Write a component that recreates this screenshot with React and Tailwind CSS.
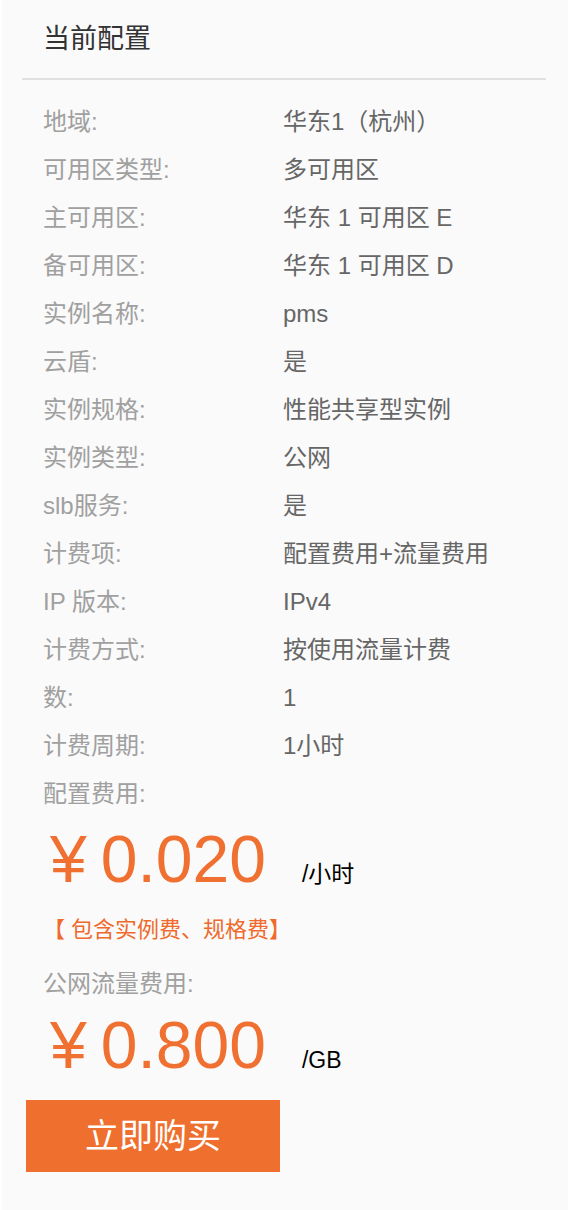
import React from 'react';

const rows = [
  ['地域:', '华东1（杭州）'],
  ['可用区类型:', '多可用区'],
  ['主可用区:', '华东 1 可用区 E'],
  ['备可用区:', '华东 1 可用区 D'],
  ['实例名称:', 'pms'],
  ['云盾:', '是'],
  ['实例规格:', '性能共享型实例'],
  ['实例类型:', '公网'],
  ['slb服务:', '是'],
  ['计费项:', '配置费用+流量费用'],
  ['IP 版本:', 'IPv4'],
  ['计费方式:', '按使用流量计费'],
  ['数:', '1'],
  ['计费周期:', '1小时'],
];

const Price = ({ value, unit }) => (
  <div className="flex items-baseline pl-[7px]">
    <span className="text-[66px] leading-none text-[#ef7030] mr-[14px]">¥</span>
    <span className="text-[66px] leading-none text-[#ef7030]">{value}</span>
    <span className="ml-[36px] text-[23px] text-black">{unit}</span>
  </div>
);

export default function App() {
  return (
    <div
      className="min-h-[1210px] bg-white"
      style={{ fontFamily: '"Liberation Sans", "Noto Sans CJK SC", sans-serif' }}
    >
      <div className="ml-[2px] min-h-[1210px] bg-[#fafafa]">
        {/* 标题 */}
        <div className="h-[78px] flex items-center pl-[41px] text-[27px] text-[#333]">
          当前配置
        </div>
        <div className="ml-[20px] w-[524px] h-[2px] bg-[#e0e0e0]"></div>

        <div className="pl-[41px] pt-[18px]">
          {rows.map(([label, value]) => (
            <div key={label} className="flex h-[48px] items-center text-[24px]">
              <div className="w-[240px] text-[#a0a0a0]">{label}</div>
              <div className="text-[#666]">{value}</div>
            </div>
          ))}

          <div className="h-[48px] flex items-center text-[24px] text-[#a0a0a0]">配置费用:</div>
          <div className="mt-[8px]">
            <Price value="0.020" unit="/小时" />
          </div>
          <div className="mt-[21px] text-[22px] text-[#ef6a2c]">【 包含实例费、规格费】</div>

          <div className="mt-[14px] h-[48px] flex items-center text-[24px] text-[#a0a0a0]">公网流量费用:</div>
          <div className="mt-[4px]">
            <Price value="0.800" unit="/GB" />
          </div>
        </div>

        <button className="mt-[22px] ml-[24px] w-[254px] h-[72px] bg-[#ef6f2e] text-white text-[34px] flex items-center justify-center">
          立即购买
        </button>
      </div>
    </div>
  );
}
